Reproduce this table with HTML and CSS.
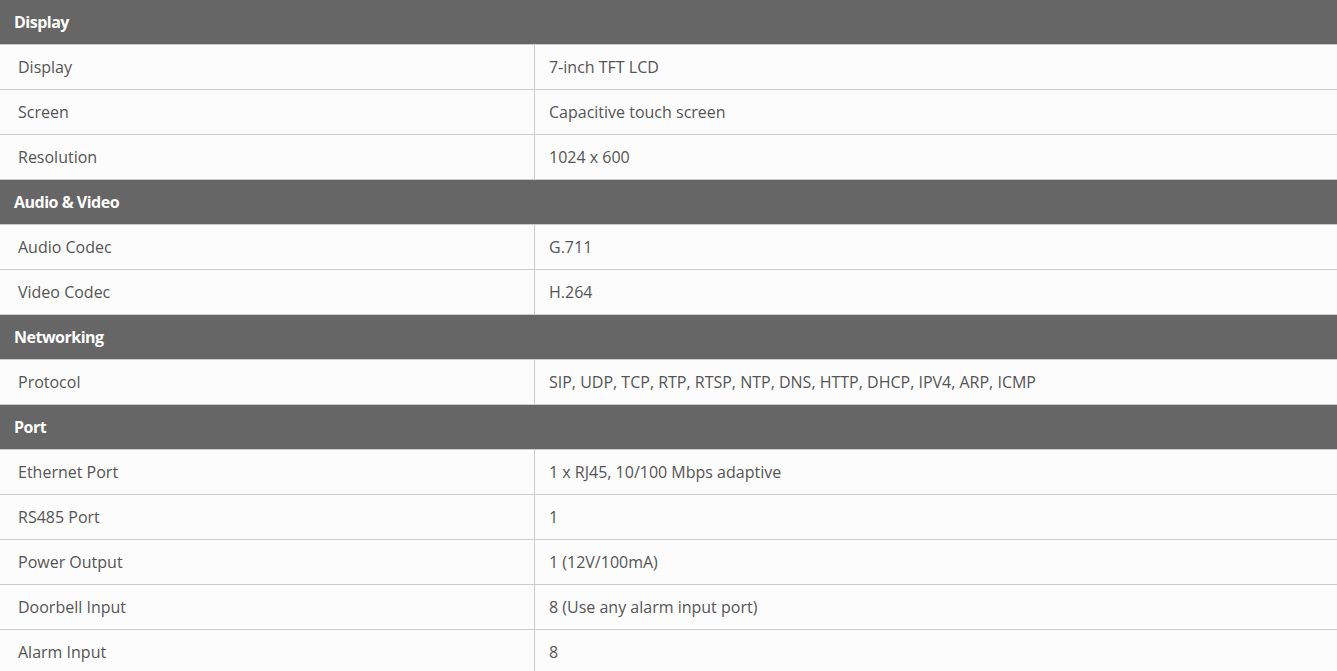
FILE: index.html
```html
<!DOCTYPE html>
<html>
<head>
<meta charset="utf-8">
<link rel="stylesheet" href="styles.css">
</head>
<body>
<table class="spec">
<colgroup><col class="ck"><col class="cv"></colgroup>
<tbody>
<tr class="group"><th colspan="2">Display</th></tr>
<tr><td class="k">Display</td><td class="v">7-inch TFT LCD</td></tr>
<tr><td class="k">Screen</td><td class="v">Capacitive touch screen</td></tr>
<tr><td class="k">Resolution</td><td class="v">1024 x 600</td></tr>
<tr class="group"><th colspan="2">Audio &amp; Video</th></tr>
<tr><td class="k">Audio Codec</td><td class="v">G.711</td></tr>
<tr><td class="k">Video Codec</td><td class="v">H.264</td></tr>
<tr class="group"><th colspan="2">Networking</th></tr>
<tr><td class="k">Protocol</td><td class="v">SIP, UDP, TCP, RTP, RTSP, NTP, DNS, HTTP, DHCP, IPV4, ARP, ICMP</td></tr>
<tr class="group"><th colspan="2">Port</th></tr>
<tr><td class="k">Ethernet Port</td><td class="v">1 x RJ45, 10/100 Mbps adaptive</td></tr>
<tr><td class="k">RS485 Port</td><td class="v">1</td></tr>
<tr><td class="k">Power Output</td><td class="v">1 (12V/100mA)</td></tr>
<tr><td class="k">Doorbell Input</td><td class="v">8 (Use any alarm input port)</td></tr>
<tr><td class="k">Alarm Input</td><td class="v">8</td></tr>
</tbody>
</table>
</body>
</html>
```
FILE: styles.css
```css
html, body {
  margin: 0;
  padding: 0;
  background: #fcfcfc;
}
.spec {
  width: 1337px;
  border-collapse: separate;
  border-spacing: 0;
  font-family: "Open Sans", "Liberation Sans", sans-serif;
  font-size: 16px;
  color: #555;
  table-layout: fixed;
}
.spec col.ck {
  width: 535px;
}
.spec th {
  background: #666;
  color: #fff;
  text-align: left;
  font-weight: 700;
  padding: 0 0 0 14px;
  height: 45px;
  box-sizing: border-box;
  border-bottom: 1px solid #ccc;
  letter-spacing: -0.5px;
}
.spec td {
  height: 45px;
  box-sizing: border-box;
  padding: 0;
  border-bottom: 1px solid #ccc;
  background: #fcfcfc;
  vertical-align: middle;
}
.spec td.k {
  padding-left: 18px;
  border-right: 1px solid #ccc;
}
.spec td.v {
  padding-left: 14px;
}
```
